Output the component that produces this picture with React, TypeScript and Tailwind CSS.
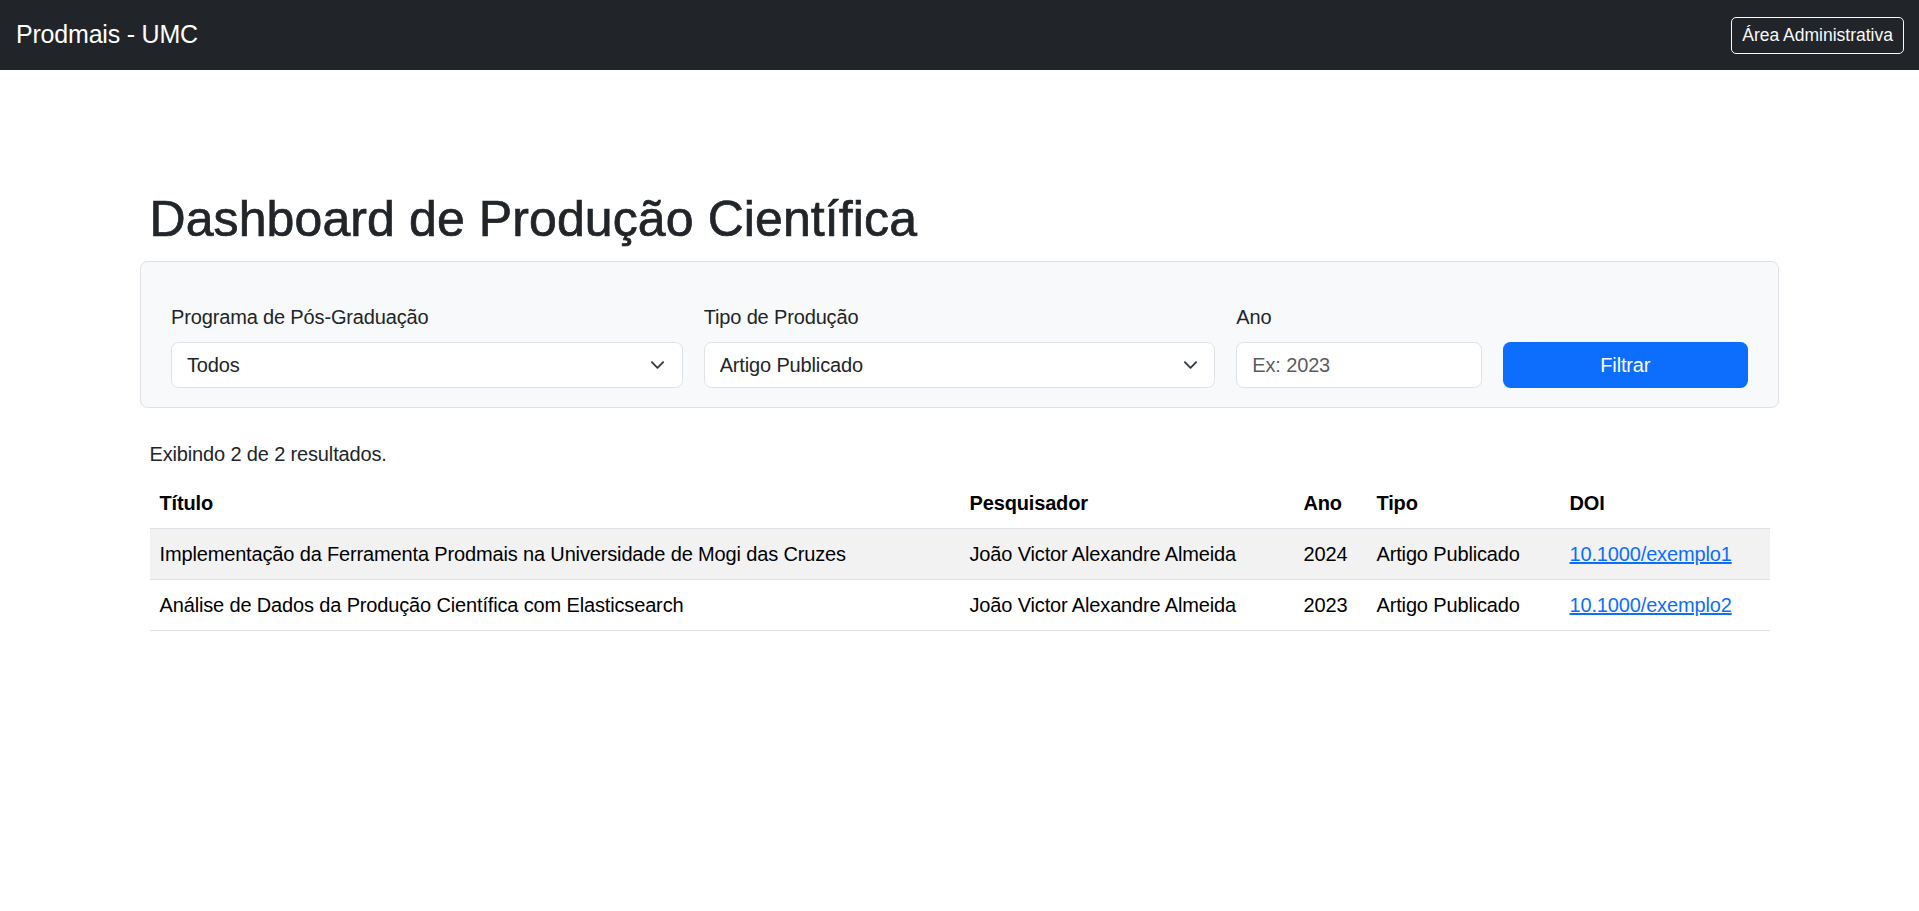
const rows = [
  {
    titulo: "Implementação da Ferramenta Prodmais na Universidade de Mogi das Cruzes",
    pesquisador: "João Victor Alexandre Almeida",
    ano: "2024",
    tipo: "Artigo Publicado",
    doi: "10.1000/exemplo1",
  },
  {
    titulo: "Análise de Dados da Produção Científica com Elasticsearch",
    pesquisador: "João Victor Alexandre Almeida",
    ano: "2023",
    tipo: "Artigo Publicado",
    doi: "10.1000/exemplo2",
  },
];

const Chevron = () => (
  <svg
    className="pointer-events-none absolute right-[17.5px] top-1/2 -translate-y-1/2"
    width="15"
    height="15"
    viewBox="0 0 16 16"
    fill="none"
  >
    <path d="m2 5 6 6 6-6" stroke="#343a40" strokeWidth="2" strokeLinecap="round" strokeLinejoin="round" />
  </svg>
);

const SelectField = ({ label, options }: { label: string; options: string[] }) => (
  <div className="col-span-4">
    <label className="block mb-[10px] text-[20px] leading-[30px]">{label}</label>
    <div className="relative">
      <select className="w-full h-[46px] appearance-none bg-white border border-[#dee2e6] rounded-[7.5px] pl-[15px] pr-[50px] text-[20px] leading-[30px] tracking-[-0.15px] text-[#212529] outline-none">
        {options.map((o) => (
          <option key={o}>{o}</option>
        ))}
      </select>
      <Chevron />
    </div>
  </div>
);

const App = () => {
  return (
    <div className="min-h-screen bg-white font-['Liberation_Sans',Arial,sans-serif] text-[#212529] tracking-[-0.15px]">
      <nav className="h-[70px] bg-[#212529] flex items-center justify-between pl-[16px] pr-[15px]">
        <a href="#" className="text-[25px] leading-[37.5px] tracking-[-0.2px] text-white">
          Prodmais - UMC
        </a>
        <button className="h-[37px] px-[10px] border border-[#f8f9fa] rounded-[5px] text-[17.5px] leading-[26px] tracking-normal text-[#f8f9fa] cursor-pointer">
          Área Administrativa
        </button>
      </nav>

      <main className="w-[1650px] mx-auto px-[15px] pt-[119px]">
        <h1 className="text-[50px] leading-[60px] font-medium tracking-[0.1px] [-webkit-text-stroke:0.7px_#212529] mb-[12px]">
          Dashboard de Produção Científica
        </h1>

        <div className="mx-[-9.5px] border border-[#dee2e6] rounded-[7.5px] bg-[#f8f9fa] pt-[40px] pb-[19px] px-[30px]">
          <div className="grid grid-cols-12 gap-x-[21px] items-end">
            <SelectField label="Programa de Pós-Graduação" options={["Todos"]} />
            <SelectField label="Tipo de Produção" options={["Artigo Publicado"]} />
            <div className="col-span-2">
              <label className="block mb-[10px] text-[20px] leading-[30px]">Ano</label>
              <input
                placeholder="Ex: 2023"
                className="w-full h-[46px] bg-white border border-[#dee2e6] rounded-[7.5px] px-[15px] text-[20px] leading-[30px] outline-none placeholder:text-[rgba(33,37,41,0.75)]"
              />
            </div>
            <div className="col-span-2">
              <button className="w-full h-[46px] bg-[#0d6efd] rounded-[7.5px] text-white text-[20px] leading-[30px] cursor-pointer">
                Filtrar
              </button>
            </div>
          </div>
        </div>

        <p className="mt-[31px] mb-[9px] text-[20px] leading-[30px]">Exibindo 2 de 2 resultados.</p>

        <table className="w-full table-fixed border-collapse text-[20px] leading-[30px] text-black">
          <colgroup>
            <col className="w-[810px]" />
            <col className="w-[334px]" />
            <col className="w-[73px]" />
            <col className="w-[193px]" />
            <col className="w-[210px]" />
          </colgroup>
          <thead>
            <tr className="border-b border-[#dee2e6]">
              <th className="text-left font-bold p-[10px]">Título</th>
              <th className="text-left font-bold p-[10px]">Pesquisador</th>
              <th className="text-left font-bold p-[10px]">Ano</th>
              <th className="text-left font-bold p-[10px]">Tipo</th>
              <th className="text-left font-bold p-[10px]">DOI</th>
            </tr>
          </thead>
          <tbody>
            {rows.map((r, i) => (
              <tr key={r.doi} className={i % 2 === 0 ? "bg-[#f2f2f2] border-b border-[#dee2e6]" : "border-b border-[#dee2e6]"}>
                <td className="p-[10px]">{r.titulo}</td>
                <td className="p-[10px]">{r.pesquisador}</td>
                <td className="p-[10px]">{r.ano}</td>
                <td className="p-[10px]">{r.tipo}</td>
                <td className="p-[10px]">
                  <a href="#" className="text-[#0d6efd] underline">
                    {r.doi}
                  </a>
                </td>
              </tr>
            ))}
          </tbody>
        </table>
      </main>
    </div>
  );
};

export default App;
